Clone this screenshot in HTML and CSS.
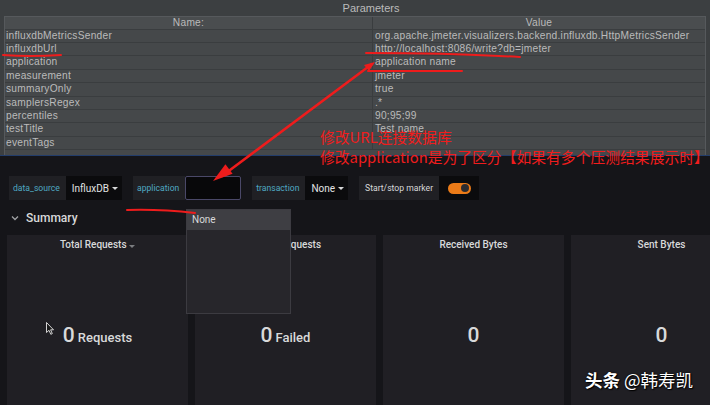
FILE: index.html
```html
<!DOCTYPE html>
<html lang="zh">
<head>
    <meta charset="UTF-8">
    <meta name="viewport" content="width=device-width, initial-scale=1.0">
    <title>Backend Listener - Grafana</title>
    <link rel="stylesheet" href="styles.css">
</head>
<body>

    <div class="jmeter">
        <div class="jm-title">Parameters</div>
        <div class="params">
            <div class="prow head"><div>Name:</div><div>Value</div></div>
            <div class="prow"><div>influxdbMetricsSender</div><div>org.apache.jmeter.visualizers.backend.influxdb.HttpMetricsSender</div></div>
            <div class="prow"><div>influxdbUrl</div><div>http://localhost:8086/write?db=jmeter</div></div>
            <div class="prow"><div>application</div><div>application name</div></div>
            <div class="prow"><div>measurement</div><div>jmeter</div></div>
            <div class="prow"><div>summaryOnly</div><div>true</div></div>
            <div class="prow"><div>samplersRegex</div><div>.*</div></div>
            <div class="prow"><div>percentiles</div><div>90;95;99</div></div>
            <div class="prow"><div>testTitle</div><div>Test name</div></div>
            <div class="prow"><div>eventTags</div><div></div></div>
        </div>
    </div>

    <div class="grafana">
        <div class="toolbar">
            <div class="var">
                <span class="var-label">data_source</span>
                <span class="var-value">InfluxDB <i class="caret"></i></span>
            </div>
            <div class="var">
                <span class="var-label">application</span>
                <span class="var-input"></span>
            </div>
            <div class="var">
                <span class="var-label">transaction</span>
                <span class="var-value">None <i class="caret"></i></span>
            </div>
            <div class="var">
                <span class="var-label plain">Start/stop marker</span>
                <span class="var-switch"><span class="switch"></span></span>
            </div>
        </div>

        <div class="row-title">
            <svg class="chevron" width="8" height="6" viewBox="0 0 8 6"><path d="M1 1.5 L4 4.5 L7 1.5" fill="none" stroke="#9fa1a4" stroke-width="1.3"/></svg>
            Summary
        </div>

        <div class="panels">
            <div class="panel">
                <div class="panel-title">Total Requests <i class="caret dim"></i></div>
                <div class="stat"><span class="num">0</span><span class="unit">Requests</span></div>
            </div>
            <div class="panel">
                <div class="panel-title">Failed Requests</div>
                <div class="stat"><span class="num">0</span><span class="unit">Failed</span></div>
            </div>
            <div class="panel">
                <div class="panel-title">Received Bytes</div>
                <div class="stat"><span class="num">0</span></div>
            </div>
            <div class="panel">
                <div class="panel-title">Sent Bytes</div>
                <div class="stat"><span class="num">0</span></div>
            </div>
        </div>
    </div>

    <!-- open variable dropdown -->
    <div class="dropdown">
        <div class="dd-item active">None</div>
    </div>

    <!-- red hand-drawn notes -->
    <div class="note">
        <div>修改URL连接数据库</div>
        <div>修改application是为了区分【如果有多个压测结果展示时】</div>
    </div>

    <svg class="marks" width="710" height="405" viewBox="0 0 710 405">
        <g fill="none" stroke="#ee1c1c" stroke-width="2" stroke-linecap="round">
            <path d="M3 55 Q30 57 61 55"/>
            <path d="M366 53 Q450 53 520 57"/>
            <path d="M368 71 L462 71"/>
            <path d="M127 210 Q160 209 195 213"/>
            <path d="M372 64 L222 176" stroke-width="2.5"/>
        </g>
        <g fill="#ee1c1c">
            <polygon points="213,181 225.4,164.2 232.6,173.8"/>
            <polygon points="375,62 364,65 369,71"/>
        </g>
    </svg>

    <svg class="cursor" width="8" height="13" viewBox="0 0 8 13">
        <path d="M0.5 0.5 L0.5 10.5 L3 8.3 L4.8 12.3 L6.3 11.6 L4.6 7.8 L7.5 7.8 Z" fill="#1a1a1a" stroke="#e6e6e6" stroke-width="0.9"/>
    </svg>

    <div class="watermark"><b>头条</b> @韩寿凯</div>

</body>
</html>
```

FILE: styles.css
```css
body {
    margin: 0;
    width: 710px;
    height: 405px;
    overflow: hidden;
    position: relative;
    background: #151519;
    font-family: Roboto, 'Noto Sans', sans-serif;
}

/* ---------- JMeter parameters table ---------- */

.jmeter {
    height: 155px;
    background: #3c3f41;
    border-bottom: 1px solid #233d6b;
    font-family: 'Liberation Sans', Arial, sans-serif;
    color: #bbbbbb;
}

.jm-title {
    height: 16px;
    line-height: 16px;
    font-size: 11px;
    text-align: center;
    padding-left: 32px;
}

.params {
    margin: 0 4px;
    height: 139px;
    background: #45484a;
    border: 1px solid #56595c;
    border-bottom: none;
    box-sizing: border-box;
}

.prow {
    display: grid;
    grid-template-columns: 367px 1fr;
    height: 13.4px;
    line-height: 12.4px;
    font-size: 10.2px;
    letter-spacing: 0.25px;
    border-bottom: 1px solid #3a3d3f;
    box-sizing: border-box;
}

.prow > div {
    padding-left: 1px;
    white-space: nowrap;
    overflow: hidden;
}

.prow > div + div {
    border-left: 1px solid #3a3d3f;
    padding-left: 2px;
}

.prow.head {
    height: 12.6px;
    background: #4a4d4f;
    text-align: center;
}

.prow.head > div {
    padding-left: 0;
}

/* ---------- Grafana dashboard ---------- */

.grafana {
    padding-top: 20px;
}

.toolbar {
    display: flex;
    gap: 11px;
    padding-left: 9px;
    height: 24px;
}

.var {
    display: flex;
}

.var-label {
    display: flex;
    align-items: center;
    padding: 0 6px 0 4px;
    background: #202024;
    color: #4fa9c2;
    font-size: 8.6px;
}

.var-label.plain {
    color: #d8d9da;
    padding: 0 6px;
    font-size: 8.6px;
}

.var-value {
    display: flex;
    align-items: center;
    gap: 3px;
    padding: 0 4px 0 6px;
    background: #0b0b0d;
    color: #e2e3e4;
    font-size: 10px;
}

.var-input {
    width: 54px;
    background: #08080a;
    border: 1px solid #4a4868;
    border-radius: 2px;
}

.var-switch {
    display: flex;
    align-items: center;
    width: 40px;
    padding-left: 9px;
    box-sizing: border-box;
    background: #0b0b0d;
}

.switch {
    width: 23px;
    height: 11px;
    border-radius: 6px;
    background: #eb7b18;
    position: relative;
}

.switch::after {
    content: '';
    position: absolute;
    right: 2px;
    top: 1.5px;
    width: 8px;
    height: 8px;
    border-radius: 50%;
    background: #2c2c30;
}

.caret {
    display: inline-block;
    width: 0;
    height: 0;
    border-left: 3px solid transparent;
    border-right: 3px solid transparent;
    border-top: 3px solid #d8d9da;
}

.caret.dim {
    border-top-color: #7b7d80;
}

.row-title {
    display: flex;
    align-items: center;
    gap: 7px;
    height: 35px;
    padding-left: 11px;
    color: #d8d9da;
    font-size: 12px;
    font-weight: 500;
}

.panels {
    display: flex;
    gap: 7px;
    padding-left: 7px;
    width: 760px;
}

.panel {
    flex: none;
    width: 181px;
    height: 180px;
    background: #201f24;
    display: flex;
    flex-direction: column;
    align-items: center;
}

.panel-title {
    height: 20px;
    line-height: 20px;
    font-size: 10px;
    font-weight: 500;
    color: #d8d9da;
}

.stat {
    margin-top: 68px;
    color: #d8d9da;
    line-height: 24px;
    font-weight: 500;
}

.num {
    font-size: 21px;
}

.unit {
    font-size: 13px;
    margin-left: 3px;
}

/* ---------- overlays ---------- */

.dropdown {
    position: absolute;
    left: 186px;
    top: 209px;
    width: 105px;
    height: 105px;
    background: #27262b;
    border: 1px solid #3c3b41;
    box-sizing: border-box;
}

.dd-item {
    height: 20px;
    line-height: 20px;
    padding-left: 5px;
    font-size: 10px;
    color: #d8d9da;
}

.dd-item.active {
    background: #3e3e43;
}

.note {
    position: absolute;
    left: 320px;
    top: 127px;
    color: #f01d1d;
    font-family: 'Noto Sans CJK SC', sans-serif;
    font-size: 14.8px;
    line-height: 20px;
    white-space: nowrap;
}

.marks {
    position: absolute;
    left: 0;
    top: 0;
}

.cursor {
    position: absolute;
    left: 46px;
    top: 322px;
}

.watermark {
    position: absolute;
    left: 585px;
    top: 367px;
    color: #ffffff;
    font-family: 'Noto Sans CJK SC', sans-serif;
    font-size: 17.5px;
    text-shadow: 0 0 2px #000, 1px 1px 1px #000;
}
```
